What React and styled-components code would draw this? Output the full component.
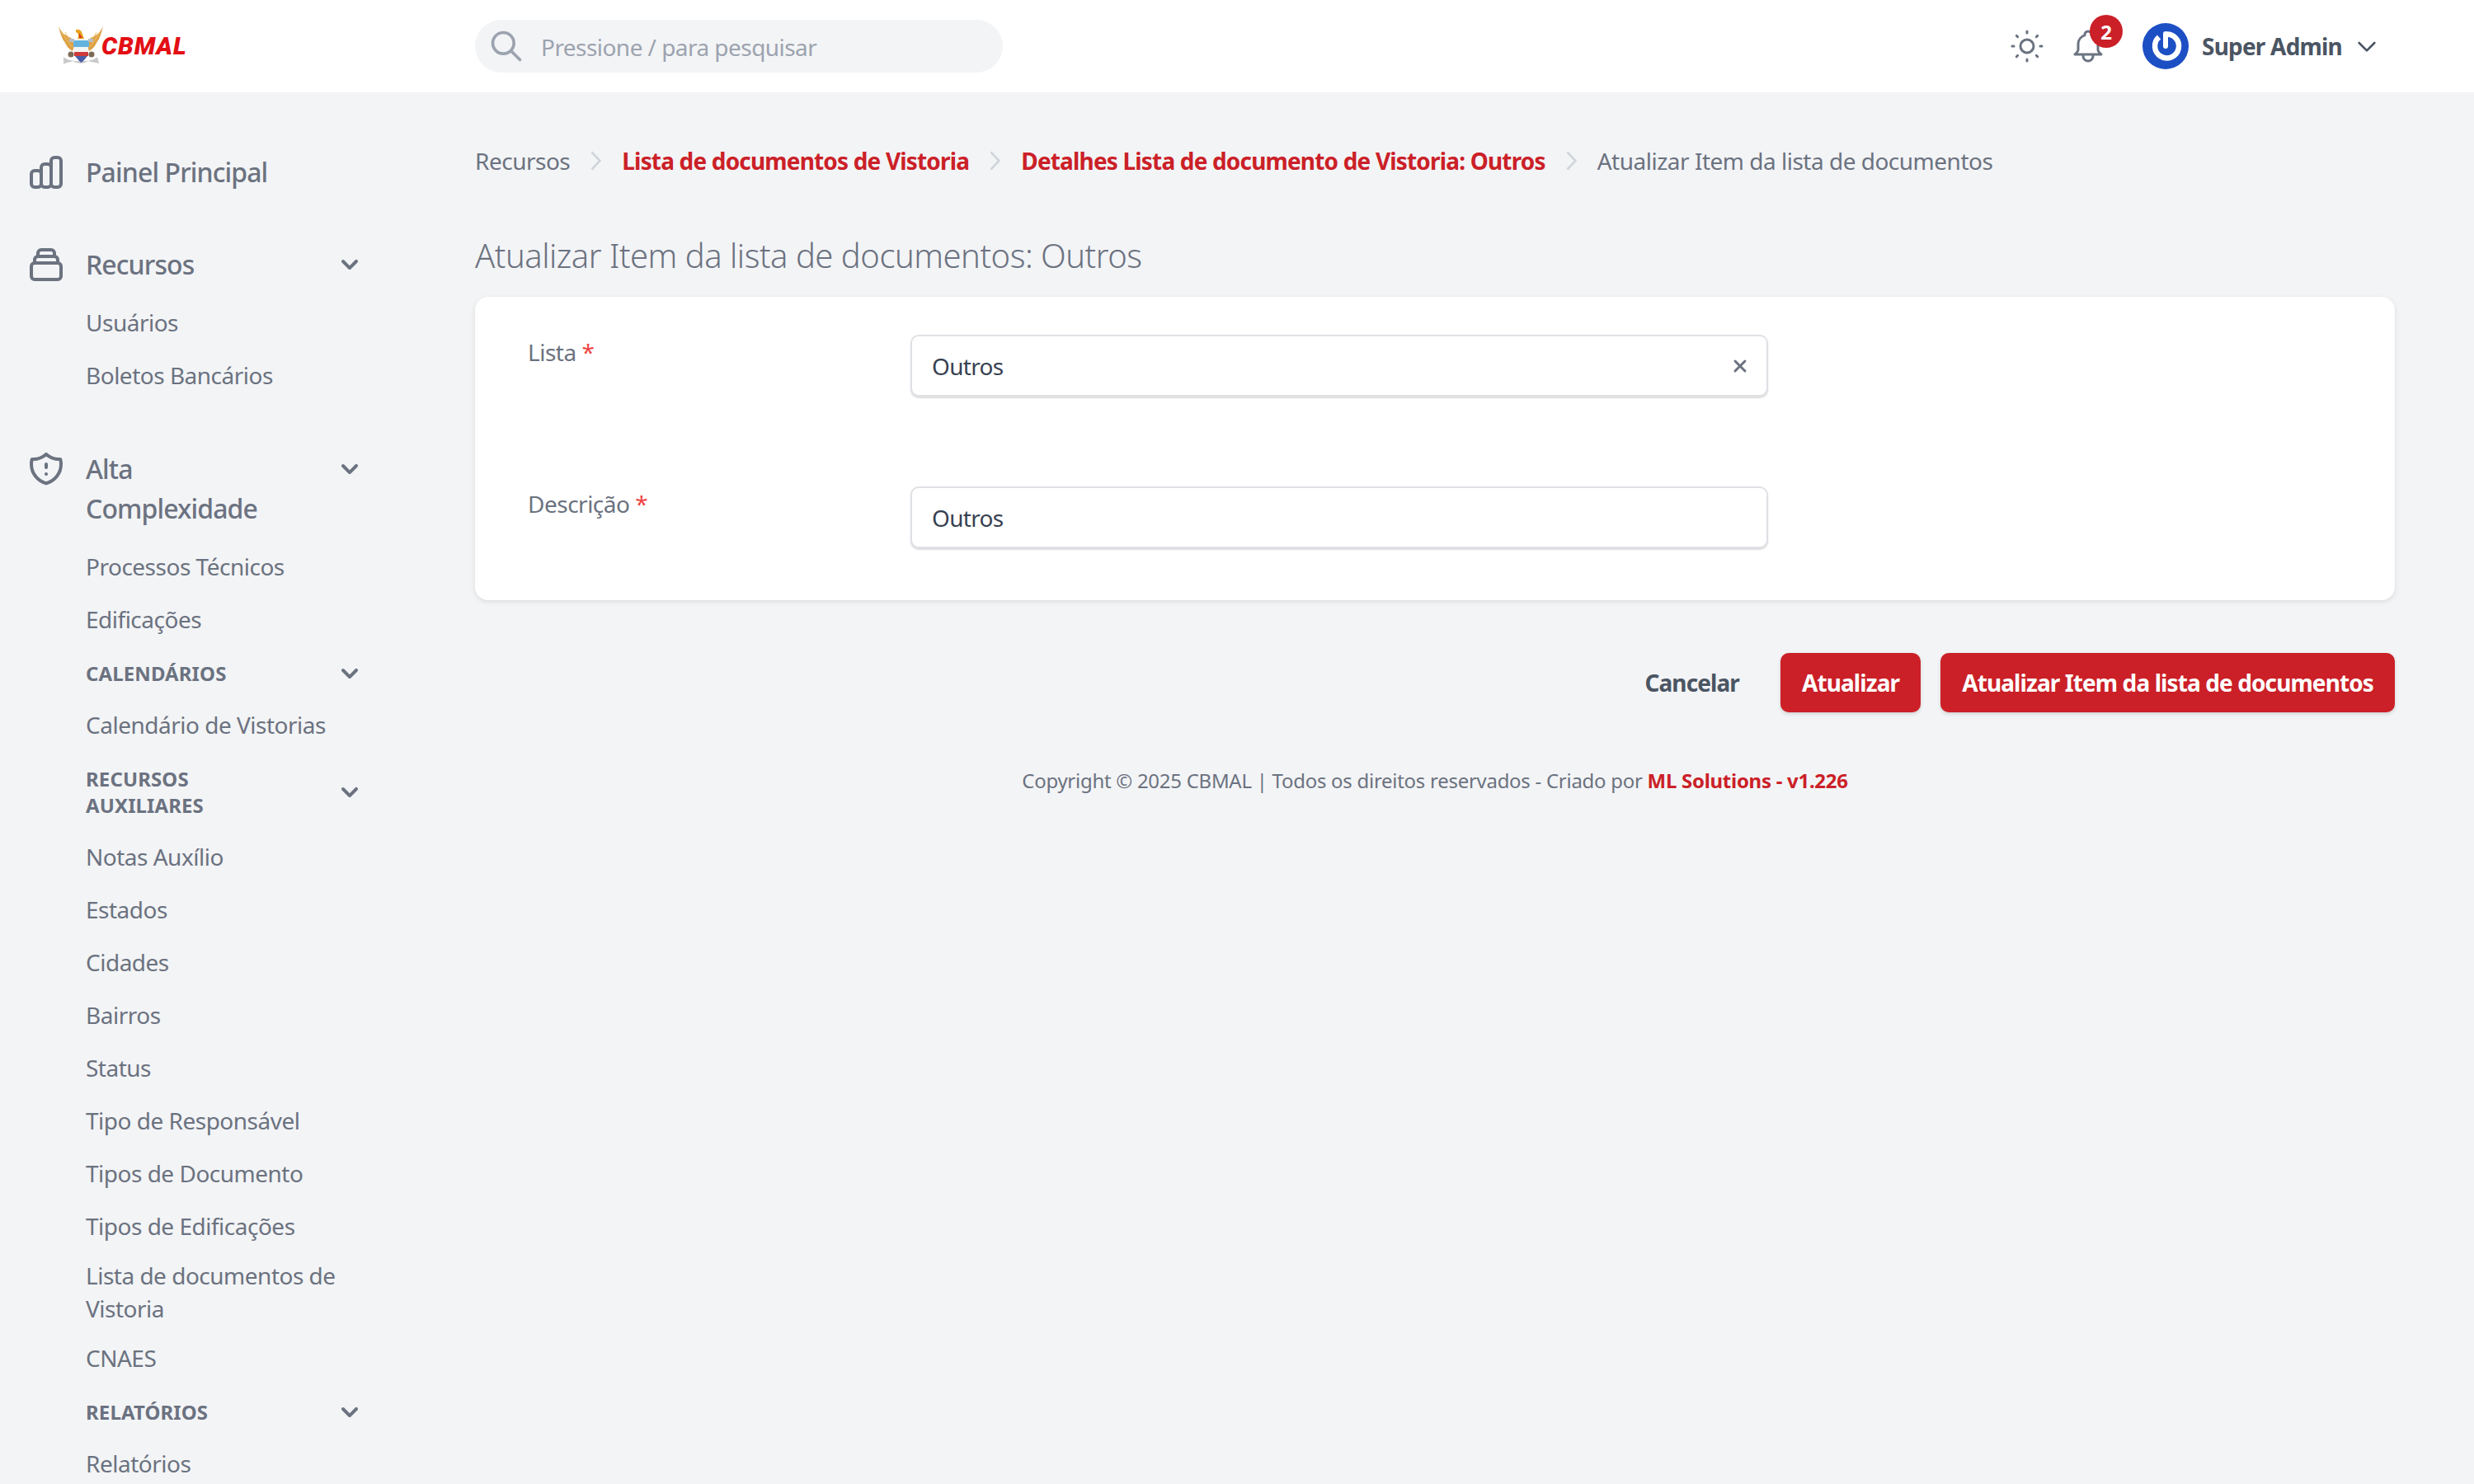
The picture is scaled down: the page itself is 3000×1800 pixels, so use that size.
import React from 'react'
import styled, { createGlobalStyle } from 'styled-components'

const RED = '#cb2027'

const GlobalStyle = createGlobalStyle`
    html, body {
        margin: 0;
        padding: 0;
        overflow: hidden;
        background: #f3f4f6;
    }
    * {
        box-sizing: border-box;
    }
`

const Page = styled.div`
    width: 3000px;
    height: 1800px;
    overflow: hidden;
    font-family: "Noto Sans", "Open Sans", sans-serif;
    background: #f3f4f6;
    color: #6b7280;
    letter-spacing: -0.5px;
`

const TopBar = styled.header`
    height: 112px;
    background: #ffffff;
    display: flex;
    align-items: center;
`

const LogoBox = styled.div`
    width: 576px;
    padding-left: 71px;
    display: flex;
    align-items: center;
`

const LogoText = styled.span`
    font-family: Roboto, "Liberation Sans", sans-serif;
    font-style: italic;
    font-weight: 900;
    font-size: 30px;
    letter-spacing: 0.9px;
    line-height: 40px;
    color: #e30f14;
    margin-left: -2px;
`

const SearchBox = styled.label`
    width: 640px;
    height: 64px;
    border-radius: 32px;
    background: #f3f4f6;
    display: flex;
    align-items: center;
    padding-left: 16px;
    gap: 20px;
    color: #9ca3af;
`

const SearchInput = styled.input`
    border: 0;
    outline: 0;
    background: transparent;
    flex: 1;
    font: inherit;
    font-size: 28px;
    letter-spacing: -0.55px;
    color: #374151;
    padding: 2px 0 0 0;
    &::placeholder {
        color: #9ca3af;
        opacity: 1;
    }
`

const TopActions = styled.div`
    margin-left: auto;
    padding-right: 114px;
    display: flex;
    align-items: center;
`

const IconButton = styled.div`
    position: relative;
    width: 48px;
    height: 48px;
    color: #6b7280;
    margin-right: ${(p) => p.$gap}px;
`

const Badge = styled.span`
    position: absolute;
    top: -14px;
    left: 26px;
    width: 40px;
    height: 40px;
    border-radius: 50%;
    background: ${RED};
    color: #ffffff;
    font-weight: 700;
    font-size: 24px;
    letter-spacing: 0;
    display: flex;
    align-items: center;
    justify-content: center;
`

const UserName = styled.span`
    margin: 0 14px 0 16px;
    font-size: 28px;
    font-weight: 700;
    letter-spacing: -0.8px;
    line-height: 40px;
    color: #4b5563;
`

const Body = styled.div`
    display: flex;
`

const SideBar = styled.nav`
    width: 480px;
    flex: none;
    padding: 73px 36px 0 32px;
    display: flex;
    flex-direction: column;
    gap: 64px;
`

const MenuRow = styled.div`
    display: flex;
    align-items: flex-start;
`

const MenuIcon = styled.svg`
    width: 48px;
    height: 48px;
    flex: none;
    margin-right: 24px;
    color: #6b7280;
`

const MenuLabel = styled.span`
    flex: 1;
    font-size: 32px;
    font-weight: 500;
    letter-spacing: -0.9px;
    line-height: 48px;
    color: #6b7280;
`

const Chevron = styled.svg`
    width: 40px;
    height: 40px;
    flex: none;
    color: #6b7280;
    margin-top: ${(p) => (p.$menu ? '4px' : '0')};
`

const SubList = styled.div`
    margin: 26px 0 6px 72px;
    display: flex;
    flex-direction: column;
    gap: 24px;
`

const SubItem = styled.div`
    font-size: 28px;
    line-height: 40px;
    color: #6b7280;
    margin: ${(p) => (p.$wrapped ? '-4px 0' : '0')};
    padding-right: ${(p) => (p.$wrapped ? '20px' : '0')};
`

const SectionRow = styled.div`
    display: flex;
    align-items: center;
    margin: 2px 0 -2px 0;
`

const SectionLabel = styled.span`
    flex: 1;
    padding: 4px 60px 4px 0;
    font-size: 24px;
    font-weight: 700;
    letter-spacing: 0.1px;
    line-height: 32px;
    text-transform: uppercase;
    color: #6b7280;
`

const Main = styled.main`
    flex: 1;
    padding: 63px 96px 0 96px;
`

const Breadcrumbs = styled.div`
    display: flex;
    align-items: center;
    gap: 25px;
    font-size: 28px;
    line-height: 40px;
`

const Crumb = styled.span`
    color: ${(p) => (p.$link ? RED : '#6b7280')};
    font-weight: ${(p) => (p.$link ? 700 : 400)};
    letter-spacing: ${(p) => (p.$link ? '-0.83px' : '-0.5px')};
`

const Title = styled.h1`
    margin: 67px 0 22px 0;
    font-size: 40px;
    line-height: 56px;
    font-weight: 300;
    letter-spacing: -0.5px;
    color: #6b7280;
`

const Card = styled.section`
    background: #ffffff;
    border-radius: 16px;
    padding: 46px 64px 63px 64px;
    box-shadow: 0 2px 6px rgba(0, 0, 0, 0.1);
    display: flex;
    flex-direction: column;
    gap: 109px;
`

const FormRow = styled.div`
    display: flex;
    align-items: flex-start;
`

const FieldLabel = styled.label`
    width: 464px;
    flex: none;
    padding-top: 1px;
    font-size: 28px;
    line-height: 40px;
    color: #6b7280;
`

const Required = styled.span`
    color: #ef4444;
`

const Field = styled.div`
    position: relative;
    width: 1040px;
    height: 75px;
`

const FieldInput = styled.input`
    width: 100%;
    height: 100%;
    border: 2px solid #dfe1e5;
    border-radius: 10px;
    outline: 0;
    padding: 0 24px;
    background: #ffffff;
    font: inherit;
    font-size: 28px;
    letter-spacing: -0.7px;
    color: #374151;
    box-shadow: 0 2px 2px rgba(0, 0, 0, 0.14);
`

const ClearIcon = styled.svg`
    position: absolute;
    top: 26px;
    right: 22px;
    width: 24px;
    height: 24px;
    color: #6b7280;
`

const Actions = styled.div`
    margin-top: 64px;
    display: flex;
    justify-content: flex-end;
    align-items: center;
    gap: 24px;
`

const Button = styled.button`
    height: 72px;
    padding: 0 26px;
    border: 0;
    border-radius: 10px;
    font: inherit;
    font-size: 28px;
    font-weight: 700;
    letter-spacing: -0.9px;
    background: ${(p) => (p.$primary ? RED : 'transparent')};
    color: ${(p) => (p.$primary ? '#ffffff' : '#4b5563')};
    box-shadow: ${(p) => (p.$primary ? '0 2px 4px rgba(0, 0, 0, 0.15)' : 'none')};
`

const Footer = styled.footer`
    margin-top: 67px;
    text-align: center;
    font-size: 24px;
    letter-spacing: -0.28px;
    line-height: 32px;
    color: #6b7280;
`

const FooterLink = styled.span`
    color: ${RED};
    font-weight: 700;
`

function OutlineIcon ({ d, width = 2 }) {
    return <path d={d} fill="none" stroke="currentColor" strokeWidth={width} strokeLinecap="round" strokeLinejoin="round" />
}

function ChevronDown ({ menu }) {
    return (
        <Chevron viewBox="0 0 20 20" fill="currentColor" $menu={menu}>
            <path fillRule="evenodd" clipRule="evenodd" d="M5.293 7.293a1 1 0 011.414 0L10 10.586l3.293-3.293a1 1 0 111.414 1.414l-4 4a1 1 0 01-1.414 0l-4-4a1 1 0 010-1.414z" />
        </Chevron>
    )
}

function CrumbArrow () {
    return (
        <svg width="13" height="24" viewBox="0 0 13 24" fill="none" stroke="#d1d5db" strokeWidth="2.6">
            <path d="M1.5 1.5 L11.5 12 L1.5 22.5" />
        </svg>
    )
}

function Logo () {
    return (
        <svg width="54" height="48" viewBox="0 0 54 48">
            <path d="M0 0 C4 8 8 11 15 14 C17 16 19 18 20 21 L17 30 C12 27 10 24 8 20 C4 15 2 8 0 0z" fill="#dda146" />
            <path d="M54 0 C50 8 46 11 39 14 C37 16 35 18 34 21 L37 30 C42 27 44 24 46 20 C50 15 52 8 54 0z" fill="#dda146" />
            <path d="M4 7 C8 14 12 20 17 25 M8 7 C11 13 14 17 19 21 M50 7 C46 14 42 20 37 25 M46 7 C43 13 40 17 35 21" fill="none" stroke="#f0c36d" strokeWidth="1" />
            <path d="M21 4 C24 3 27 4 28 7 L31 15 L23 15 C25 11 24 8 21 7z" fill="#e8a21c" />
            <path d="M25 8 L29 14 L25 14z" fill="#d93a1f" />
            <path d="M6 37 C12 44 42 44 47 37 L49 45 C44 43 40 44 36 42 C30 46 22 45 17 42 C14 44 10 43 6 46z" fill="#c9c9c9" />
            <rect x="18" y="17" width="19" height="8" fill="#62b4de" />
            <rect x="19" y="25" width="17" height="6" fill="#f4f4f4" />
            <rect x="19" y="31" width="17" height="5" fill="#cf3a3a" />
            <path d="M20 36 L35 36 L30 42 L27.5 44 L25 42z" fill="#4a5fa8" />
            <circle cx="15" cy="34" r="3.5" fill="#7c6a55" />
            <circle cx="40" cy="34" r="3.5" fill="#7c6a55" />
            <rect x="13" y="15" width="6" height="4" fill="#b9bec4" />
            <rect x="36" y="15" width="6" height="4" fill="#b9bec4" />
        </svg>
    )
}

function Avatar () {
    return (
        <svg width="56" height="56" viewBox="0 0 56 56">
            <circle cx="28" cy="28" r="28" fill="#1d4fc4" />
            <path d="M20 17 A14.5 14.5 0 1 0 28 13.5" fill="none" stroke="#ffffff" strokeWidth="6.5" />
            <path d="M28 13 V28" stroke="#ffffff" strokeWidth="6" strokeLinecap="round" />
        </svg>
    )
}

const ICONS = {
    chart: 'M9 19v-6a2 2 0 00-2-2H5a2 2 0 00-2 2v6a2 2 0 002 2h2a2 2 0 002-2zm0 0V9a2 2 0 012-2h2a2 2 0 012 2v10m-6 0a2 2 0 002 2h2a2 2 0 002-2m0 0V5a2 2 0 012-2h2a2 2 0 012 2v14a2 2 0 01-2 2h-2a2 2 0 01-2-2z',
    collection: 'M19 11H5m14 0a2 2 0 012 2v6a2 2 0 01-2 2H5a2 2 0 01-2-2v-6a2 2 0 012-2m14 0V9a2 2 0 00-2-2M5 11V9a2 2 0 012-2m0 0V5a2 2 0 012-2h6a2 2 0 012 2v2M7 7h10',
    shield: 'M20.618 5.984A11.955 11.955 0 0112 2.944a11.955 11.955 0 01-8.618 3.04A12.02 12.02 0 003 9c0 5.591 3.824 10.29 9 11.622 5.176-1.332 9-6.03 9-11.622 0-1.042-.133-2.052-.382-3.016zM12 9v2m0 4h.01',
    sun: 'M12 3v1m0 16v1m9-9h-1M4 12H3m15.364 6.364l-.707-.707M6.343 6.343l-.707-.707m12.728 0l-.707.707M6.343 17.657l-.707.707M16 12a4 4 0 11-8 0 4 4 0 018 0z',
    bell: 'M15 17h5l-1.405-1.405A2.032 2.032 0 0118 14.158V11a6.002 6.002 0 00-4-5.659V5a2 2 0 10-4 0v.341C7.67 6.165 6 8.388 6 11v3.159c0 .538-.214 1.055-.595 1.436L4 17h5m6 0v1a3 3 0 11-6 0v-1m6 0H9',
    search: 'M21 21l-6-6m2-5a7 7 0 11-14 0 7 7 0 0114 0z',
    close: 'M6 18L18 6M6 6l12 12',
    down: 'M19 9l-7 7-7-7'
}

const alta = [
    { label: 'Processos Técnicos' },
    { label: 'Edificações' },
    { label: 'Calendários', section: true },
    { label: 'Calendário de Vistorias' },
    { label: 'Recursos Auxiliares', section: true },
    { label: 'Notas Auxílio' },
    { label: 'Estados' },
    { label: 'Cidades' },
    { label: 'Bairros' },
    { label: 'Status' },
    { label: 'Tipo de Responsável' },
    { label: 'Tipos de Documento' },
    { label: 'Tipos de Edificações' },
    { label: 'Lista de documentos de Vistoria', wrapped: true },
    { label: 'CNAES' },
    { label: 'Relatórios', section: true },
    { label: 'Relatórios' }
]

function App () {
    return (
        <Page>
            <GlobalStyle />
            <TopBar>
                <LogoBox>
                    <Logo />
                    <LogoText>CBMAL</LogoText>
                </LogoBox>
                <SearchBox>
                    <svg width="44" height="44" viewBox="0 0 24 24"><OutlineIcon d={ICONS.search} /></svg>
                    <SearchInput placeholder="Pressione / para pesquisar" readOnly />
                </SearchBox>
                <TopActions>
                    <IconButton $gap={26}>
                        <svg width="48" height="48" viewBox="0 0 24 24"><OutlineIcon d={ICONS.sun} width={1.5} /></svg>
                    </IconButton>
                    <IconButton $gap={42}>
                        <svg width="48" height="48" viewBox="0 0 24 24"><OutlineIcon d={ICONS.bell} width={1.5} /></svg>
                        <Badge>2</Badge>
                    </IconButton>
                    <Avatar />
                    <UserName>Super Admin</UserName>
                    <svg width="32" height="32" viewBox="0 0 24 24" color="#4b5563"><OutlineIcon d={ICONS.down} /></svg>
                </TopActions>
            </TopBar>
            <Body>
                <SideBar>
                    <MenuRow>
                        <MenuIcon viewBox="0 0 24 24"><OutlineIcon d={ICONS.chart} /></MenuIcon>
                        <MenuLabel>Painel Principal</MenuLabel>
                    </MenuRow>
                    <div>
                        <MenuRow>
                            <MenuIcon viewBox="0 0 24 24"><OutlineIcon d={ICONS.collection} /></MenuIcon>
                            <MenuLabel>Recursos</MenuLabel>
                            <ChevronDown menu />
                        </MenuRow>
                        <SubList>
                            <SubItem>Usuários</SubItem>
                            <SubItem>Boletos Bancários</SubItem>
                        </SubList>
                    </div>
                    <div>
                        <MenuRow>
                            <MenuIcon viewBox="0 0 24 24"><OutlineIcon d={ICONS.shield} /></MenuIcon>
                            <MenuLabel>Alta<br />Complexidade</MenuLabel>
                            <ChevronDown menu />
                        </MenuRow>
                        <SubList>
                            {alta.map((item, i) => item.section ? (
                                <SectionRow key={i}>
                                    <SectionLabel>{item.label}</SectionLabel>
                                    <ChevronDown />
                                </SectionRow>
                            ) : (
                                <SubItem key={i} $wrapped={item.wrapped}>{item.label}</SubItem>
                            ))}
                        </SubList>
                    </div>
                </SideBar>
                <Main>
                    <Breadcrumbs>
                        <Crumb>Recursos</Crumb>
                        <CrumbArrow />
                        <Crumb $link>Lista de documentos de Vistoria</Crumb>
                        <CrumbArrow />
                        <Crumb $link>Detalhes Lista de documento de Vistoria: Outros</Crumb>
                        <CrumbArrow />
                        <Crumb>Atualizar Item da lista de documentos</Crumb>
                    </Breadcrumbs>
                    <Title>Atualizar Item da lista de documentos: Outros</Title>
                    <Card>
                        <FormRow>
                            <FieldLabel>Lista <Required>*</Required></FieldLabel>
                            <Field>
                                <FieldInput value="Outros" readOnly />
                                <ClearIcon viewBox="0 0 24 24"><OutlineIcon d={ICONS.close} width={3} /></ClearIcon>
                            </Field>
                        </FormRow>
                        <FormRow>
                            <FieldLabel>Descrição <Required>*</Required></FieldLabel>
                            <Field>
                                <FieldInput value="Outros" readOnly />
                            </Field>
                        </FormRow>
                    </Card>
                    <Actions>
                        <Button>Cancelar</Button>
                        <Button $primary>Atualizar</Button>
                        <Button $primary>Atualizar Item da lista de documentos</Button>
                    </Actions>
                    <Footer>
                        Copyright © 2025 CBMAL | Todos os direitos reservados - Criado por <FooterLink>ML Solutions - v1.226</FooterLink>
                    </Footer>
                </Main>
            </Body>
        </Page>
    )
}

export default App
